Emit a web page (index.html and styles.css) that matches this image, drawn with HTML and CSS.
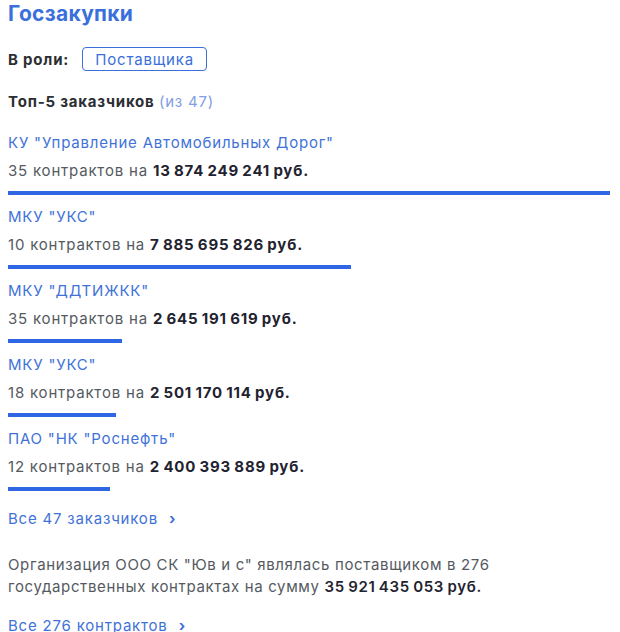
FILE: index.html
```html
<!DOCTYPE html>
<html lang="ru">
<head>
  <meta charset="UTF-8" />
  <meta name="viewport" content="width=device-width, initial-scale=1.0"/>
  <title>Госзакупки</title>
  <link rel="stylesheet" href="styles.css">
</head>
<body>
  <div class="section">
    <h2 class="title">Госзакупки</h2>

    <div class="role">
      <span class="role-label">В роли:</span>
      <span class="role-tag">Поставщика</span>
    </div>

    <div class="top-head">Топ-5 заказчиков <span class="muted-link">(из 47)</span></div>

    <div class="customers">
      <div class="customer">
        <a class="customer-name" href="#">КУ "Управление Автомобильных Дорог"</a>
        <div class="customer-sum">35 контрактов на <b>13 874 249 241 руб.</b></div>
        <div class="bar" style="width: 100%"></div>
      </div>
      <div class="customer">
        <a class="customer-name" href="#">МКУ "УКС"</a>
        <div class="customer-sum">10 контрактов на <b>7 885 695 826 руб.</b></div>
        <div class="bar" style="width: 57%"></div>
      </div>
      <div class="customer">
        <a class="customer-name" href="#">МКУ "ДДТИЖКК"</a>
        <div class="customer-sum">35 контрактов на <b>2 645 191 619 руб.</b></div>
        <div class="bar" style="width: 19%"></div>
      </div>
      <div class="customer">
        <a class="customer-name" href="#">МКУ "УКС"</a>
        <div class="customer-sum">18 контрактов на <b>2 501 170 114 руб.</b></div>
        <div class="bar" style="width: 18%"></div>
      </div>
      <div class="customer">
        <a class="customer-name" href="#">ПАО "НК "Роснефть"</a>
        <div class="customer-sum">12 контрактов на <b>2 400 393 889 руб.</b></div>
        <div class="bar" style="width: 17%"></div>
      </div>
    </div>

    <a class="more" href="#">Все 47 заказчиков <span class="chevron">›</span></a>

    <p class="summary">Организация ООО СК "Юв и с" являлась поставщиком в 276 государственных контрактах на сумму <b>35 921 435 053 руб.</b></p>

    <a class="more" href="#">Все 276 контрактов <span class="chevron">›</span></a>
  </div>
</body>
</html>
```

FILE: styles.css
```css
body {
  margin: 0;
  background-color: #fff;
  font-family: Inter, "Noto Sans", sans-serif;
  font-size: 15px;
  letter-spacing: 0.8px;
  color: #555a61;
}

.section {
  padding: 0 10px 0 8px;
}

.title {
  margin: 0;
  font-size: 21px;
  line-height: 28px;
  font-weight: 700;
  letter-spacing: 0.3px;
  color: #3a6fdc;
}

.role {
  display: flex;
  align-items: center;
  gap: 13px;
  margin-top: 19px;
  height: 24px;
}

.role-label {
  font-weight: 700;
  color: #2b2e33;
}

.role-tag {
  display: inline-flex;
  align-items: center;
  justify-content: center;
  box-sizing: border-box;
  width: 125px;
  height: 24px;
  border: 1px solid #3a6fdc;
  border-radius: 4px;
  color: #3a6fdc;
}

.top-head {
  margin-top: 21px;
  line-height: 20px;
  font-weight: 700;
  color: #2b2e33;
}

.muted-link {
  font-weight: 400;
  color: #7f9ee4;
}

.customers {
  margin-top: 21px;
  display: flex;
  flex-direction: column;
  gap: 12px;
}

.customer {
  display: flex;
  flex-direction: column;
}

.customer-name {
  line-height: 20px;
  color: #3f72d8;
  text-decoration: none;
}

.customer-sum {
  margin-top: 8px;
  line-height: 20px;
}

.customer-sum b {
  color: #1f2330;
  word-spacing: -1px;
}

.bar {
  margin-top: 10px;
  height: 4px;
  background-color: #2f66e4;
}

.more {
  display: block;
  line-height: 20px;
  margin-top: 18px;
  color: #3f72d8;
  text-decoration: none;
}

.chevron {
  display: inline-block;
  margin-left: 6px;
  font-weight: 700;
}

.summary {
  margin: 25px 0 0;
  max-width: 520px;
  line-height: 22px;
  letter-spacing: 0.65px;
}

.summary b {
  font-weight: 600;
  color: #1f2330;
  word-spacing: -1px;
}

.summary + .more {
  margin-top: 18px;
}
```
